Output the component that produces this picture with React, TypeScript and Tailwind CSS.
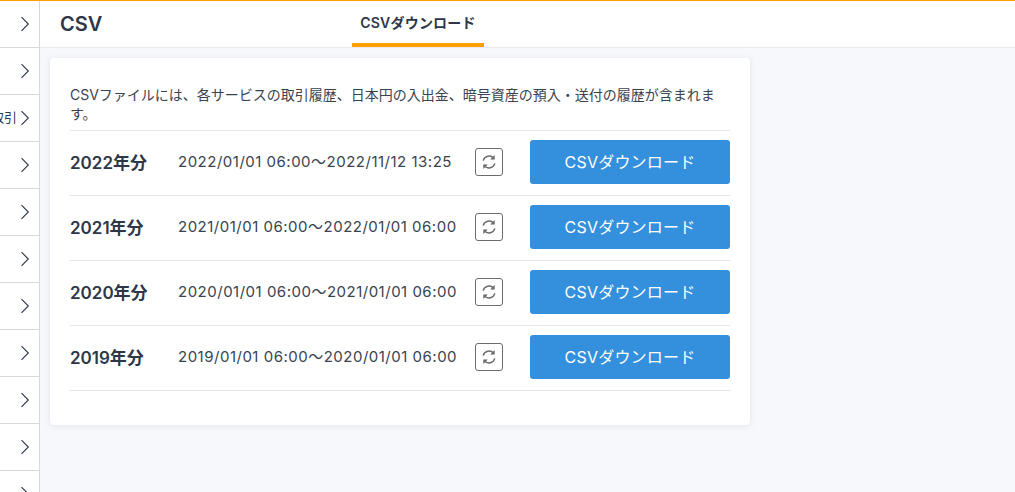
const years = [
  { label: "2022年分", range: "2022/01/01 06:00〜2022/11/12 13:25" },
  { label: "2021年分", range: "2021/01/01 06:00〜2022/01/01 06:00" },
  { label: "2020年分", range: "2020/01/01 06:00〜2021/01/01 06:00" },
  { label: "2019年分", range: "2019/01/01 06:00〜2020/01/01 06:00" },
];

const sideRows = ["", "", "取引", "", "", "", "", "", "", "", ""];

function Chevron() {
  return (
    <svg width="10" height="16" viewBox="0 0 10 16" fill="none" className="shrink-0">
      <path d="M1.5 1.2 L8.3 8 L1.5 14.8" stroke="#2d3748" strokeWidth="1.1" />
    </svg>
  );
}

function RefreshIcon() {
  return (
    <svg width="16" height="16" viewBox="0 0 16 16" fill="none" stroke="#6b6b6b" strokeWidth="1.4">
      <path d="M2.2 6.6 A6 6 0 0 1 12.6 4.2" />
      <path d="M13.8 9.4 A6 6 0 0 1 3.4 11.8" />
      <path d="M13.4 1.6 V5.2 H9.8 Z" fill="#6b6b6b" strokeWidth="0.6" />
      <path d="M2.6 14.4 V10.8 H6.2 Z" fill="#6b6b6b" strokeWidth="0.6" />
    </svg>
  );
}

export default function App() {
  return (
    <div
      className="h-[492px] w-[1015px] overflow-hidden bg-[#f7f8fc] text-[#2d3748] flex flex-col border-t border-[#ff9a00]"
      style={{ fontFamily: '"Inter", "Noto Sans CJK JP", sans-serif' }}
    >
      <div className="flex flex-1 min-h-0">
        {/* sidebar */}
        <aside className="w-10 shrink-0 bg-white border-r border-[#d8d8dc] overflow-hidden">
          {sideRows.map((text, i) => (
            <div
              key={i}
              className="h-[47px] flex items-center justify-end gap-[3px] pr-[9px] border-b border-[#d8d8dc] whitespace-nowrap"
            >
              <span className="text-[13px] text-[#2d3748]">{text}</span>
              <Chevron />
            </div>
          ))}
        </aside>

        <main className="flex-1 min-w-0">
          {/* header */}
          <header className="h-[47px] bg-white border-b border-[#e8eaf0] flex pl-5">
            <h1 className="w-[292px] text-xl font-semibold leading-[46px]">CSV</h1>
            <div className="w-[132px] h-[46px] border-b-4 border-[#ff9f00] text-center text-sm tracking-[0.2px] font-semibold leading-[44px]">
              CSVダウンロード
            </div>
          </header>

          {/* card */}
          <section className="mt-[10px] ml-[10px] w-[700px] h-[367px] rounded bg-white px-5 pt-[27px] shadow-[0_1px_6px_rgba(60,70,110,0.12)]">
            <p className="text-sm leading-[19px] h-[46px] border-b border-[#e5e5e5] text-[#3a4350]">
              CSVファイルには、各サービスの取引履歴、日本円の入出金、暗号資産の預入・送付の履歴が含まれます。
            </p>
            {years.map((y) => (
              <div key={y.label} className="h-[65px] flex items-center pb-[2px] border-b border-[#e5e5e5]">
                <div className="w-[108px] mt-[3px] text-[17px] font-semibold">{y.label}</div>
                <div className="w-[297px] mt-[1px] text-[15px] tracking-[0.5px] text-[#3a4350] whitespace-nowrap">{y.range}</div>
                <div className="w-7 h-7 rounded-[3px] border border-[#6b6b6b] flex items-center justify-center">
                  <RefreshIcon />
                </div>
                <button
                  type="button"
                  className="ml-[27px] w-[200px] h-11 rounded-[3px] bg-[#3490dc] text-white text-base tracking-[0.2px]"
                >
                  CSVダウンロード
                </button>
              </div>
            ))}
          </section>
        </main>
      </div>
    </div>
  );
}
